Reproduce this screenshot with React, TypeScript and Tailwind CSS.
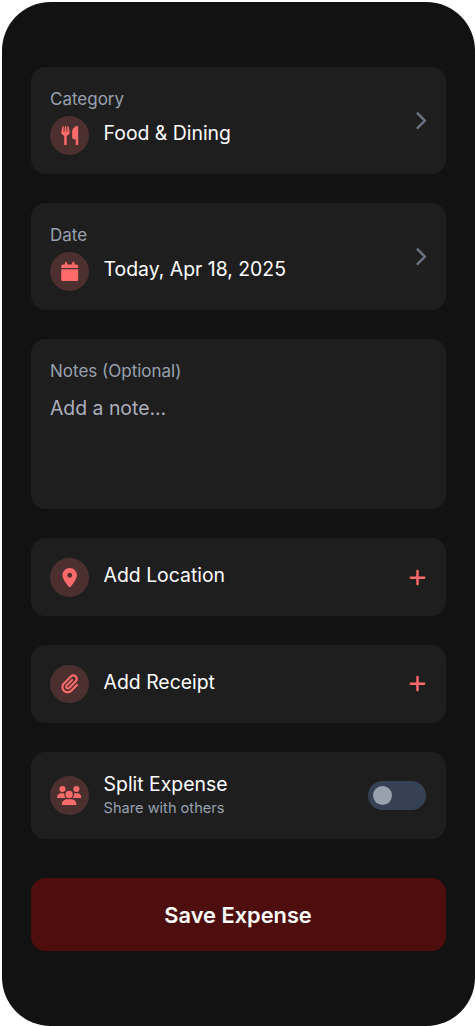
import { useState, type ReactNode } from 'react';
import {
  FaCalendar,
  FaChevronRight,
  FaLocationDot,
  FaPaperclip,
  FaPlus,
  FaUsers,
  FaUtensils,
} from 'react-icons/fa6';

function IconBadge({ children }: { children: ReactNode }) {
  return (
    <span className="flex size-[38.8px] shrink-0 items-center justify-center rounded-full bg-[#4c2f2f] text-[19.4px] text-[#ff6b6b]">
      {children}
    </span>
  );
}

function PickerRow({ label, value, icon }: { label: string; value: string; icon: ReactNode }) {
  return (
    <button
      type="button"
      className="flex h-[106.8px] w-full items-center justify-between rounded-[14.5px] bg-[#1e1e1e] px-[19.4px] text-left"
    >
      <div>
        <div className="mb-[4.8px] text-[17px] leading-[24.3px] text-gray-400">{label}</div>
        <div className="flex items-center gap-[14.8px]">
          <IconBadge>{icon}</IconBadge>
          <span className="pb-[3px] text-[19.4px] leading-[29px]">{value}</span>
        </div>
      </div>
      <FaChevronRight className="h-[19.4px] w-[12.1px] text-gray-500" />
    </button>
  );
}

function AddRow({ label, icon }: { label: string; icon: ReactNode }) {
  return (
    <button
      type="button"
      className="flex h-[77.7px] w-full items-center gap-[14.8px] rounded-[14.5px] bg-[#1e1e1e] px-[19.4px] text-left"
    >
      <IconBadge>{icon}</IconBadge>
      <span className="flex-1 pb-[3px] text-[19.4px] leading-[29px]">{label}</span>
      <FaPlus className="h-[19.4px] w-[17px] text-[#ff6b6b]" />
    </button>
  );
}

export default function App() {
  const [note, setNote] = useState('');
  const [split, setSplit] = useState(false);

  return (
    <main className="h-[1026px] w-[475px] overflow-hidden bg-white pt-[2px] pr-[0.4px] pl-[1.5px] font-['Inter',sans-serif] text-white">
      <div className="h-[1024px] rounded-[48.5px] bg-[#121212] px-[29.1px] pt-[65.4px]">
        <div className="flex flex-col gap-[29.15px]">
          <PickerRow label="Category" value="Food &amp; Dining" icon={<FaUtensils />} />
          <PickerRow label="Date" value="Today, Apr 18, 2025" icon={<FaCalendar />} />

          <div className="h-[170px] rounded-[14.5px] bg-[#1e1e1e] p-[19.4px]">
            <label htmlFor="note" className="block text-[17px] leading-[24.3px] text-gray-400">
              Notes (Optional)
            </label>
            <textarea
              id="note"
              value={note}
              onChange={(e) => setNote(e.target.value)}
              placeholder="Add a note..."
              className="mt-[10.8px] block h-[97px] w-full resize-none text-[19.4px] leading-[29px] outline-none placeholder:text-[#adaebc]"
            />
          </div>

          <AddRow label="Add Location" icon={<FaLocationDot />} />
          <AddRow label="Add Receipt" icon={<FaPaperclip />} />

          <div className="flex h-[87.4px] items-center rounded-[14.5px] bg-[#1e1e1e] px-[19.4px]">
            <IconBadge>
              <FaUsers className="h-[19.4px] w-[24.3px]" />
            </IconBadge>
            <div className="ml-[14.8px] flex-1 pb-[3px]">
              <div className="text-[19.4px] leading-[29px]">Split Expense</div>
              <div className="text-[14.6px] leading-[19.4px] text-gray-400">Share with others</div>
            </div>
            <button
              type="button"
              role="switch"
              aria-checked={split}
              aria-label="Split Expense"
              onClick={() => setSplit(!split)}
              className={`flex h-[29.1px] w-[58.3px] items-center rounded-full bg-gray-700 px-[4.8px] ${split ? 'justify-end' : ''}`}
            >
              <span className="size-[19.4px] rounded-full bg-gray-400" />
            </button>
          </div>
        </div>

        <button
          type="button"
          className="mt-[38.8px] h-[72.8px] w-full rounded-[14.5px] bg-[#4e0e0e] pt-[2px] text-[21.8px] font-semibold"
        >
          Save Expense
        </button>
      </div>
    </main>
  );
}
